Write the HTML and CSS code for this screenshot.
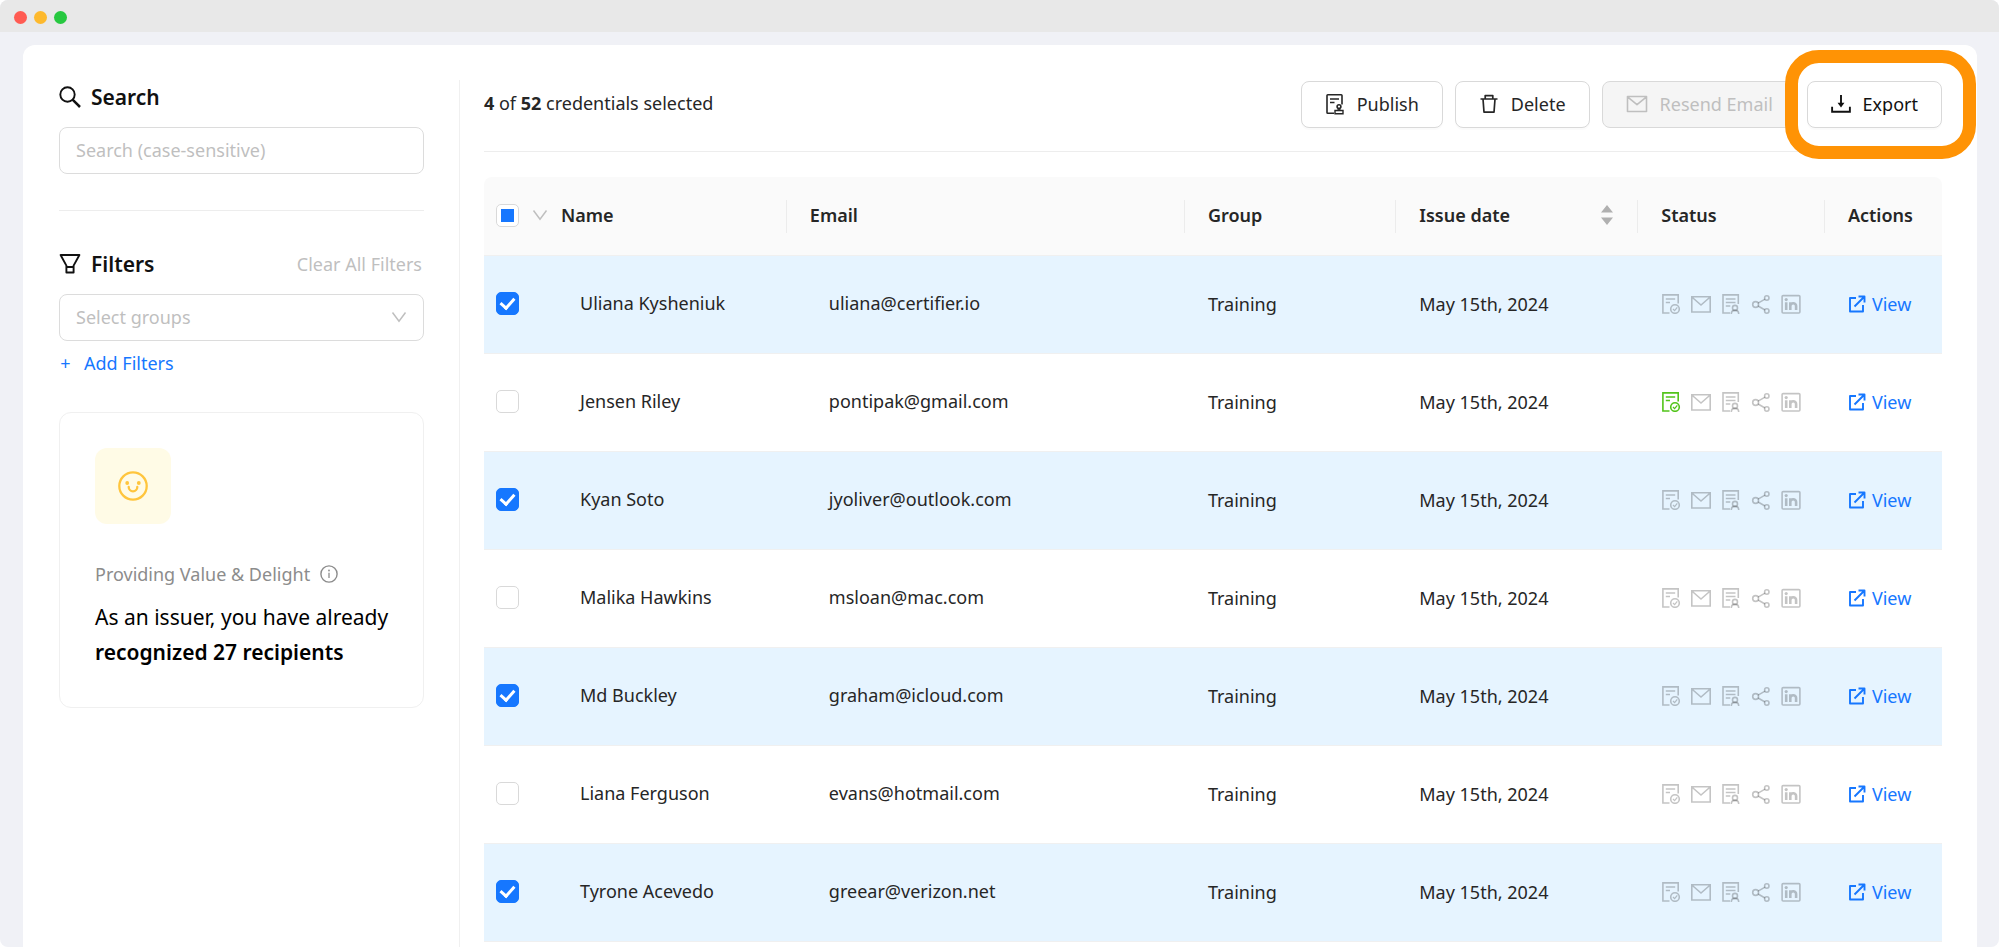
FILE: index.html
```html
<!DOCTYPE html>
<html lang="en">
<head>
<meta charset="utf-8">
<title>Credentials</title>
<link rel="stylesheet" href="styles.css">
</head>
<body>
<svg class="sprite" aria-hidden="true">
  <symbol id="i-search" viewBox="0 0 22 22"><circle cx="8.5" cy="8.5" r="7.2" fill="none" stroke="currentColor" stroke-width="1.9"/><path d="M13.6 13.6 21 21" stroke="currentColor" stroke-width="2.5"/></symbol>
  <symbol id="i-filter" viewBox="0 0 22 22"><path d="M1.600 2h18.800l-5.800 10.600v6.900H7.400v-6.900zM7.400 14h7.200" fill="none" stroke="currentColor" stroke-width="1.900" stroke-linejoin="round"/></symbol>
  <symbol id="i-down" viewBox="0 0 16 12"><path d="M1.500 1.500 8 10.200l6.500-8.700" fill="none" stroke="currentColor" stroke-width="1.500"/></symbol>
  <symbol id="i-smile" viewBox="0 0 30 30"><g fill="none" stroke="currentColor" stroke-width="2.300"><circle cx="15" cy="15" r="13.700"/><path d="M10.700 16a4.300 4.300 0 0 0 8.600 0" stroke-linecap="round"/></g><circle cx="9.200" cy="12" r="1.900" fill="currentColor"/><circle cx="20.800" cy="12" r="1.900" fill="currentColor"/></symbol>
  <symbol id="i-info" viewBox="0 0 18 18"><circle cx="9" cy="9" r="8.100" fill="none" stroke="currentColor" stroke-width="1.400"/><path d="M9 7.800v5.200" stroke="currentColor" stroke-width="1.300"/><circle cx="9" cy="5.500" r=".9" fill="currentColor"/></symbol>
  <symbol id="i-publish" viewBox="0 0 20 22"><g fill="none" stroke="currentColor" stroke-width="1.600"><path d="M9 20.200H2.800a.8.800 0 0 1-.8-.8V2.600a.8.800 0 0 1 .8-.8h13.400a.8.800 0 0 1 .8.800v9"/><path d="M5 6h9M5 9.500h4.500"/><circle cx="14" cy="13.600" r="1.900"/><path d="M13.200 15.400v2M14.800 15.400v2M10 17.500h8v3.200h-8z" stroke-width="1.400"/></g></symbol>
  <symbol id="i-trash" viewBox="0 0 18 20"><path d="M.5 5h17M3 5l1 13.200h10L15 5M5.200 5V1.600h7.600V5" fill="none" stroke="currentColor" stroke-width="1.700" stroke-linejoin="round"/></symbol>
  <symbol id="i-mail" viewBox="0 0 22 18"><path d="M1.500 1.500h19v15h-19zM1.500 1.800 11 9.600l9.500-7.800" fill="none" stroke="currentColor" stroke-width="1.600" stroke-linejoin="round"/></symbol>
  <symbol id="i-export" viewBox="0 0 18 18"><path d="M1 11.500V16h16v-4.500M9 1v9" fill="none" stroke="currentColor" stroke-width="1.700"/><path d="M5.900 7.800h6.200L9 12.200z" fill="currentColor"/></symbol>
  <symbol id="i-issued" viewBox="0 0 20 20"><g fill="none" stroke="currentColor" stroke-width="1.600"><path d="M8.500 19H1.900V.9h15.300v8.600M4.800 5h9.400M4.800 8.500H9"/><circle cx="14" cy="15" r="4.300"/><path d="m12 15 1.600 1.600 2.700-3.200" stroke-width="1.300"/></g></symbol>
  <symbol id="i-letter" viewBox="0 0 20 20"><path d="M.8 2.700h18.400V18H.8zM.8 3l9.200 8 9.200-8" fill="none" stroke="currentColor" stroke-width="1.600"/></symbol>
  <symbol id="i-viewed" viewBox="0 0 20 20"><g fill="none" stroke="currentColor" stroke-width="1.600"><path d="M9 19H2V.9h15.300V10M4.800 5h9.700M4.800 8.500h9.700M4.800 12h4.500"/><circle cx="14" cy="13.900" r="2.500"/><path d="M10.300 20c0-2.400 1.500-3.600 3.700-3.600s3.700 1.200 3.700 3.600"/></g></symbol>
  <symbol id="i-share" viewBox="0 0 20 20"><g fill="none" stroke="currentColor" stroke-width="1.600"><circle cx="4.600" cy="10.500" r="2.900"/><circle cx="15.800" cy="4" r="2.200"/><circle cx="15.800" cy="17" r="2.200"/><path d="m7.100 9.100 6.900-4M7.100 12l6.900 4"/></g></symbol>
  <symbol id="i-linkedin" viewBox="0 0 20 20"><rect x="1.100" y="1.600" width="17.800" height="17.400" rx="1" fill="none" stroke="currentColor" stroke-width="1.600"/><circle cx="5.200" cy="5.600" r="1.600" fill="currentColor"/><path d="M5.200 8.200V16M9.300 8.200V16M9.300 12c0-3.400 5.800-3.800 5.800 0v4" fill="none" stroke="currentColor" stroke-width="2.600"/></symbol>
  <symbol id="i-open" viewBox="0 0 18 18"><path d="M8 3H2v13.500h13V10M6.500 11.500 15.500 2.500M10.500 1.500h6v6" fill="none" stroke="currentColor" stroke-width="1.900" stroke-linejoin="round"/></symbol>
</svg>

<div class="window">
  <header class="titlebar"><span class="dot red"></span><span class="dot amber"></span><span class="dot green"></span></header>
  <div class="stage">
    <div class="panel">
      <aside class="sidebar">
        <label class="heading" for="search"><svg class="ic-22"><use href="#i-search"/></svg>Search</label>
        <input class="field" id="search" type="text" placeholder="Search (case-sensitive)">
        <hr class="rule">
        <div class="filter-head">
          <label class="heading" for="groups"><svg class="ic-22"><use href="#i-filter"/></svg>Filters</label>
          <button class="clear" type="button">Clear All Filters</button>
        </div>
        <div class="select-wrap">
          <select class="field" id="groups"><option>Select groups</option></select>
          <svg class="select-arrow"><use href="#i-down"/></svg>
        </div>
        <button class="add" type="button"><span class="plus">+</span>Add Filters</button>
        <section class="insight">
          <div class="tile"><svg><use href="#i-smile"/></svg></div>
          <p class="caption">Providing Value &amp; Delight <svg><use href="#i-info"/></svg></p>
          <p class="message">As an issuer, you have already <strong>recognized 27 recipients</strong></p>
        </section>
      </aside>

      <main class="main">
        <div class="toolbar">
          <p class="count"><b>4</b> of <b>52</b> credentials selected</p>
          <div class="buttons">
            <button class="btn" type="button"><svg class="ic-publish"><use href="#i-publish"/></svg>Publish</button>
            <button class="btn" type="button"><svg class="ic-trash"><use href="#i-trash"/></svg>Delete</button>
            <button class="btn resend" type="button" disabled><svg class="ic-mail"><use href="#i-mail"/></svg>Resend Email</button>
            <span class="spot"><button class="btn strong" type="button"><svg class="ic-export"><use href="#i-export"/></svg>Export</button></span>
          </div>
        </div>
        <table class="table">
          <colgroup><col class="c-check"><col class="c-name"><col class="c-email"><col class="c-group"><col class="c-date"><col class="c-status"><col class="c-actions"></colgroup>
          <thead>
            <tr>
              <th class="check"><div class="check-all"><input class="box partial" type="checkbox" aria-label="Select all"><svg><use href="#i-down"/></svg></div></th>
              <th class="name">Name</th>
              <th class="sep">Email</th>
              <th class="sep">Group</th>
              <th class="sep"><div class="sortable">Issue date<svg viewBox="0 0 12 20"><path d="M6 0l6 7.500H0zM6 20l6-7.500H0z" fill="#b0b0b0"/></svg></div></th>
              <th class="sep">Status</th>
              <th class="sep">Actions</th>
            </tr>
          </thead>
          <tbody id="rows"></tbody>
        </table>
      </main>
    </div>
  </div>
</div>
<script src="app.js"></script>
</body>
</html>
```
FILE: styles.css
```css
* { box-sizing: border-box; }
body { margin: 0; background: #fff; font: 18px/28px "Noto Sans", "Open Sans", sans-serif; color: #262626; }
p { margin: 0; }
svg { display: block; flex: none; }
button, input, select { font: inherit; color: inherit; }
.sprite { position: absolute; width: 0; height: 0; }

.window { min-height: 100vh; display: flex; flex-direction: column; border-radius: 8px; overflow: hidden; background: #f0f1f6; }
.titlebar { height: 32px; display: flex; align-items: center; gap: 7px; padding: 2px 14px 0; background: #e8e8e8; }
.dot { width: 13px; height: 13px; border-radius: 50%; }
.red { background: #ff5b52; }
.amber { background: #fdb92d; }
.green { background: #27c840; }
.stage { flex: 1; display: flex; padding: 13px 22px 0 23px; }
.panel { flex: 1; display: flex; align-items: stretch; min-width: 0; padding: 35px 35px 0 36px; background: #fff; border-radius: 12px 12px 0 0; }

.sidebar { width: 401px; flex: none; padding-right: 35px; border-right: 1px solid #f0f0f0; }
.heading { display: flex; align-items: center; gap: 10px; height: 35px; padding-bottom: 2px; font-size: 21px; font-weight: 600; color: #111; }
.ic-22 { width: 22px; height: 22px; }
.field { display: block; width: 100%; height: 47px; padding: 0 16px 2px; border: 1px solid #dcdcdc; border-radius: 8px; background: #fff; outline: 0; }
#search { margin-top: 12px; }
.field::placeholder { color: #bfbfbf; opacity: 1; }
select.field { appearance: none; color: #bfbfbf; }
.rule { height: 1px; margin: 36px 0; border: 0; background: #ededed; }
.filter-head { display: flex; justify-content: space-between; align-items: center; margin-bottom: 12px; }
.clear { padding: 0 2px 2px; border: 0; background: none; color: #bfbfbf; }
.select-wrap { position: relative; }
.select-arrow { position: absolute; right: 17px; top: 17px; width: 16px; height: 12px; color: #bfbfbf; pointer-events: none; }
.add { display: flex; gap: 12px; margin-top: 8px; padding: 0; border: 0; background: none; color: #1677ff; }
.plus { width: 13px; text-align: center; }
.insight { margin-top: 35px; padding: 35px 24px 36px 35px; border: 1px solid #f0f0f0; border-radius: 12px; }
.tile { width: 76px; height: 76px; display: grid; place-items: center; border-radius: 12px; background: #fffbe6; color: #ffc53d; }
.tile svg { width: 30px; height: 30px; }
.caption { display: flex; align-items: center; gap: 10px; margin-top: 36px; color: #8c8c8c; white-space: nowrap; }
.caption svg { width: 18px; height: 18px; }
.message { margin-top: 12px; padding-bottom: 1px; font-size: 21px; line-height: 35px; color: #000; white-space: nowrap; }
.message strong { display: block; font-weight: 600; }

.main { flex: 1; min-width: 0; padding-left: 24px; }
.toolbar { display: flex; justify-content: space-between; align-items: flex-start; height: 72px; padding-top: 1px; border-bottom: 1px solid #ededed; }
.count { line-height: 44px; }
.count b { font-weight: 700; }
.buttons { display: flex; gap: 12px; }
.btn { height: 47px; display: flex; align-items: center; gap: 12px; padding: 0 23px 2px; border: 1px solid #d9d9d9; border-radius: 8px; background: #fff; box-shadow: 0 2px 1px rgba(0, 0, 0, .02); white-space: nowrap; }
.btn:disabled { background: #f5f5f5; color: #bfbfbf; box-shadow: none; }
.resend { width: 193px; }
.strong { color: #111; }
.spot { position: relative; }
.spot::after { content: ""; position: absolute; inset: -31px -34px -31px -22px; border: 13px solid #ff9305; border-radius: 34px; pointer-events: none; }
.ic-publish { width: 20px; height: 22px; }
.ic-trash, .ic-export { width: 20px; height: 20px; }
.ic-mail { width: 22px; height: 18px; }

.table { width: 100%; margin-top: 25px; border-collapse: separate; border-spacing: 0; table-layout: fixed; }
.c-check { width: 77px; }
.c-email { width: 27.3%; }
.c-group { width: 14.5%; }
.c-date { width: 16.6%; }
.c-status { width: 12.8%; }
.c-actions { width: 8.1%; }
th { position: relative; height: 79px; padding: 0 24px 2px; background: #fafafa; border-bottom: 1px solid #f0f0f0; text-align: left; font-weight: 600; }
td { height: 98px; padding: 0 24px 2px; border-bottom: 1px solid #f0f0f0; white-space: nowrap; }
th:first-child { border-top-left-radius: 8px; }
th:last-child { border-top-right-radius: 8px; padding-right: 0; }
td:last-child { padding-right: 0; }
th.check, td.check { padding: 0 0 2px 12px; }
th.name { padding-left: 0; }
td.name { padding: 0 0 4px 19px; }
td.email { padding: 0 0 4px 43px; }
.sep::before { content: ""; position: absolute; left: 0; top: 23px; width: 1px; height: 33px; background: #ececec; }
.picked td { background: #e6f4ff; }
.check-all { display: flex; align-items: center; gap: 13px; color: #bfbfbf; }
.check-all svg { width: 16px; height: 12px; }
.sortable { display: flex; align-items: center; justify-content: space-between; }
.sortable svg { width: 12px; height: 20px; }
.box { appearance: none; position: relative; display: block; width: 23px; height: 23px; margin: 0; border: 1px solid #d9d9d9; border-radius: 5px; background: #fff; }
.box:checked { border-color: #1677ff; background: #1677ff; }
.box:checked::after { content: ""; position: absolute; left: 6px; top: 2px; width: 6px; height: 11px; border: solid #fff; border-width: 0 3px 3px 0; transform: rotate(42deg); }
.partial::after { content: ""; position: absolute; inset: 4px; width: 13px; height: 13px; background: #1677ff; }
.status { display: flex; gap: 10px; color: rgba(0, 0, 0, .23); }
.status svg { width: 20px; height: 20px; }
.status .on { color: #52c41a; }
.view { display: flex; align-items: center; gap: 6px; color: #1677ff; text-decoration: none; }
.view svg { width: 18px; height: 18px; }
```
FILE: app.js
```js
const people = [
  ["Uliana Kysheniuk", "uliana@certifier.io", true],
  ["Jensen Riley", "pontipak@gmail.com", false, true],
  ["Kyan Soto", "jyoliver@outlook.com", true],
  ["Malika Hawkins", "msloan@mac.com", false],
  ["Md Buckley", "graham@icloud.com", true],
  ["Liana Ferguson", "evans@hotmail.com", false],
  ["Tyrone Acevedo", "greear@verizon.net", true]
];
const icons = ["issued", "letter", "viewed", "share", "linkedin"];
document.getElementById("rows").innerHTML = people.map(([name, email, picked, issued]) => `
  <tr class="${picked ? "picked" : ""}">
    <td class="check"><input class="box" type="checkbox" aria-label="Select ${name}"${picked ? " checked" : ""}></td>
    <td class="name">${name}</td>
    <td class="email">${email}</td>
    <td>Training</td>
    <td>May 15th, 2024</td>
    <td><div class="status">${icons.map((id, i) => `<svg class="${issued && i === 0 ? "on" : ""}"><use href="#i-${id}"/></svg>`).join("")}</div></td>
    <td><a class="view" href="#"><svg><use href="#i-open"/></svg>View</a></td>
  </tr>`).join("");
```
